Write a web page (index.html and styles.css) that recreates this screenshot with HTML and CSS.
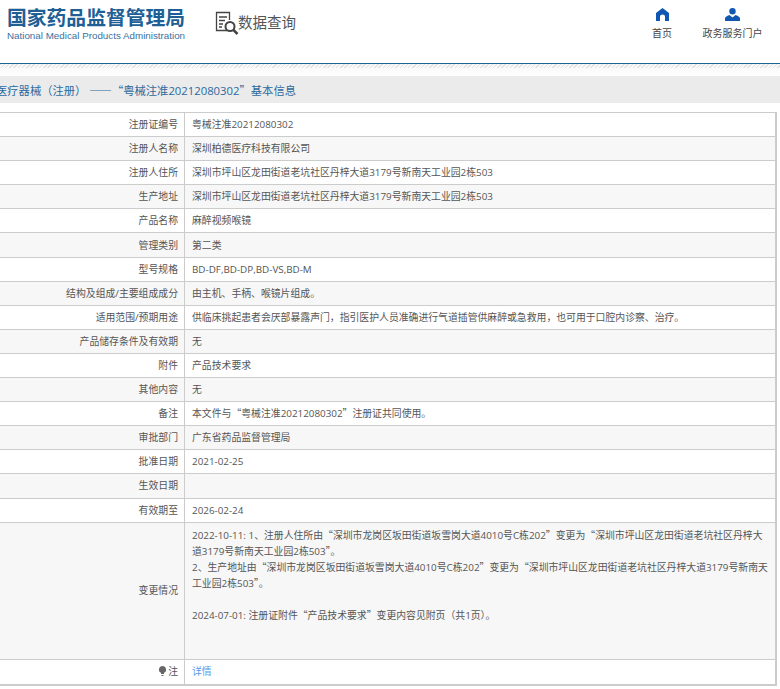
FILE: index.html
```html
<!DOCTYPE html>
<html lang="zh-CN">
<head>
  <meta charset="UTF-8" />
  <title>数据查询</title>
  <link rel="stylesheet" href="styles.css">
</head>
<body>
  <div class="header">
    <div class="logo">
      <div class="logo-cn">国家药品监督管理局</div>
      <div class="logo-en">National Medical Products Administration</div>
    </div>
    <div class="query">
      <svg class="query-icon" width="24" height="24" viewBox="0 0 24 24" fill="none" stroke="#444" stroke-width="1.3">
        <path d="M12 19.5H1.5V1.5H14.5V9"/>
        <path d="M4 6H12M4 9.5H10M4 13H8M4 16H7"/>
        <circle cx="15" cy="15.5" r="4.5" stroke-width="2"/>
        <path d="M18.500 19L22.500 23" stroke-width="2.500"/>
      </svg>
      <span class="query-text">数据查询</span>
    </div>
    <div class="nav">
      <div class="nav-item nav-home">
        <svg width="13" height="13" viewBox="0 0 13 13" fill="#0f57b0"><path d="M6.500 0L13 5V13H9V8.500Q9 6.500 6.500 6.500Q4 6.500 4 8.500V13H0V5Z"/></svg>
        <span>首页</span>
      </div>
      <div class="nav-item nav-portal">
        <svg width="15" height="13" viewBox="0 0 15 13" fill="#0f57b0"><circle cx="7.500" cy="3.200" r="3.200"/><path d="M0 13V10.500Q0 8.500 4.500 7L7.500 9.500L10.500 7Q15 8.500 15 10.500V13Z"/></svg>
        <span>政务服务门户</span>
      </div>
    </div>
  </div>
  <div class="stripe"></div>
  <div class="crumb">医疗器械（注册） <span class="q">——“</span>粤械注准20212080302<span class="q">”</span>基本信息</div>

  <div class="info">
    <div class="row"><div class="label">注册证编号</div><div class="value">粤械注准20212080302</div></div>
    <div class="row"><div class="label">注册人名称</div><div class="value">深圳柏德医疗科技有限公司</div></div>
    <div class="row"><div class="label">注册人住所</div><div class="value">深圳市坪山区龙田街道老坑社区丹梓大道3179号新南天工业园2栋503</div></div>
    <div class="row"><div class="label">生产地址</div><div class="value">深圳市坪山区龙田街道老坑社区丹梓大道3179号新南天工业园2栋503</div></div>
    <div class="row"><div class="label">产品名称</div><div class="value">麻醉视频喉镜</div></div>
    <div class="row"><div class="label">管理类别</div><div class="value">第二类</div></div>
    <div class="row"><div class="label">型号规格</div><div class="value">BD-DF,BD-DP,BD-VS,BD-M</div></div>
    <div class="row"><div class="label">结构及组成/主要组成成分</div><div class="value">由主机、手柄、喉镜片组成。</div></div>
    <div class="row"><div class="label">适用范围/预期用途</div><div class="value">供临床挑起患者会厌部暴露声门，指引医护人员准确进行气道插管供麻醉或急救用，也可用于口腔内诊察、治疗。</div></div>
    <div class="row"><div class="label">产品储存条件及有效期</div><div class="value">无</div></div>
    <div class="row"><div class="label">附件</div><div class="value">产品技术要求</div></div>
    <div class="row"><div class="label">其他内容</div><div class="value">无</div></div>
    <div class="row"><div class="label">备注</div><div class="value"><span>本文件与<span class="q">“</span>粤械注准20212080302<span class="q">”</span>注册证共同使用。</span></div></div>
    <div class="row"><div class="label">审批部门</div><div class="value">广东省药品监督管理局</div></div>
    <div class="row"><div class="label">批准日期</div><div class="value">2021-02-25</div></div>
    <div class="row"><div class="label">生效日期</div><div class="value"></div></div>
    <div class="row"><div class="label">有效期至</div><div class="value">2026-02-24</div></div>
    <div class="row row-tall">
      <div class="label">变更情况</div>
      <div class="value">2022-10-11: 1、注册人住所由<span class="q">“</span>深圳市龙岗区坂田街道坂雪岗大道4010号C栋202<span class="q">”</span>变更为<span class="q">“</span>深圳市坪山区龙田街道老坑社区丹梓大道3179号新南天工业园2栋503<span class="q">”</span>。<br>2、生产地址由<span class="q">“</span>深圳市龙岗区坂田街道坂雪岗大道4010号C栋202<span class="q">”</span>变更为<span class="q">“</span>深圳市坪山区龙田街道老坑社区丹梓大道3179号新南天工业园2栋503<span class="q">”</span>。<br><br>2024-07-01: 注册证附件<span class="q">“</span>产品技术要求<span class="q">”</span>变更内容见附页（共1页）。</div>
    </div>
    <div class="row">
      <div class="label">
        <svg class="note-icon" width="7" height="10" viewBox="0 0 7 10" fill="#666"><path d="M3.500 0A3.500 3.500 0 0 1 5 6.700V8H2V6.700A3.500 3.500 0 0 1 3.500 0ZM2.500 9H4.500V10H2.500Z"/></svg>注
      </div>
      <div class="value"><a class="detail" href="#">详情</a></div>
    </div>
  </div>
</body>
</html>
```

FILE: styles.css
```css
* {
  margin: 0;
  padding: 0;
  box-sizing: border-box;
}
html, body {
  width: 780px;
  height: 689px;
  overflow: hidden;
  background: white;
}
body {
  font-family: "Open Sans", "Noto Sans CJK SC", sans-serif;
  font-size: 9.85px;
  color: #555;
}
.q {
  font-family: "Noto Sans CJK SC", sans-serif;
}
.header {
  display: flex;
  height: 63px;
}
.logo {
  width: 215px;
  padding: 6px 0 0 7px;
  color: #205f96;
  font-family: "Liberation Sans", "Noto Sans CJK SC", sans-serif;
}
.logo-cn {
  font-size: 19.8px;
  line-height: 24px;
  font-weight: bold;
  white-space: nowrap;
}
.logo-en {
  font-size: 9.8px;
  line-height: 12px;
  white-space: nowrap;
  color: #3a719f;
}
.query {
  display: flex;
  align-items: center;
  height: 24px;
  margin-top: 11px;
  font-size: 14.500px;
  color: #555;
}
.query-text {
  margin: -3px 0 0 -1px;
}
.nav {
  display: flex;
  margin-left: auto;
}
.nav-item {
  display: flex;
  flex-direction: column;
  align-items: center;
  padding-top: 8px;
  font-size: 10px;
  color: #444;
  white-space: nowrap;
}
.nav-item span {
  margin-top: 5px;
  line-height: 14px;
}
.nav-home {
  width: 20px;
  margin-right: 31px;
}
.nav-portal {
  width: 59px;
  margin-right: 18px;
}
.stripe {
  height: 13px;
  border-top: 1px solid #1f6390;
  background:
    repeating-linear-gradient(135deg, #e2e2e2 0 1px, transparent 1px 3px) top/100% 4px no-repeat,
    linear-gradient(#f6f6f6, white);
}
.crumb {
  height: 27px;
  margin-left: -4px;
  background: #ebebeb;
  color: #2b6a9e;
  font-size: 11.3px;
  line-height: 28px;
  white-space: nowrap;
}
.info {
  width: 777px;
  margin-top: 9px;
  border-top: 1px solid #ccc;
  border-right: 2px solid #ccc;
  border-bottom: 2px solid #ccc;
}
.row {
  display: flex;
  height: 24.1px;
  border-bottom: 1px solid #ccc;
}
.row:nth-child(even) {
  background: #f7f7f7;
}
.row:last-child {
  border-bottom: none;
}
.row-tall {
  height: 137px;
}
.label {
  display: flex;
  align-items: center;
  justify-content: flex-end;
  flex: 0 0 185px;
  padding: 0 6px 1px 0;
  border-right: 1px solid #ccc;
  white-space: nowrap;
}
.value {
  display: flex;
  align-items: center;
  flex: 1;
  min-width: 0;
  padding: 0 0 1px 7px;
  white-space: nowrap;
}
.row-tall .value {
  display: block;
  padding: 4px 6px 0 7px;
  line-height: 16px;
  white-space: normal;
}
.note-icon {
  margin-right: 2px;
}
.detail {
  color: #5a9be8;
  text-decoration: none;
}
```
